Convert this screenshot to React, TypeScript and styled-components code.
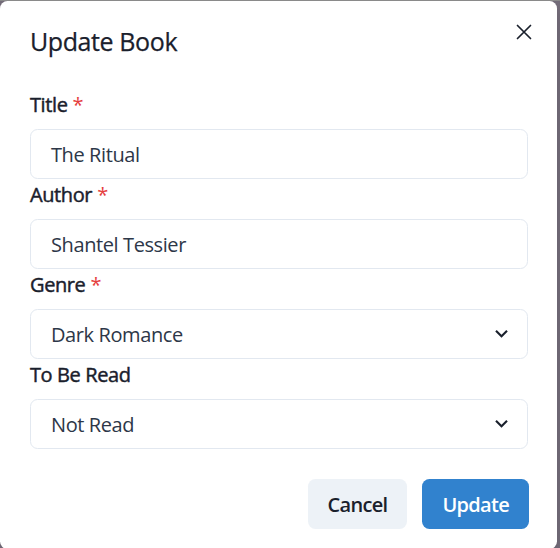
import React from "react";
import styled, { createGlobalStyle } from "styled-components";

const Global = createGlobalStyle`
  html, body { margin: 0; padding: 0; }
  body {
    background: #726b78;
    font-family: "Open Sans", "Noto Sans", sans-serif;
    width: 560px;
    height: 548px;
    overflow: hidden;
  }
  * { box-sizing: border-box; }
`;

const Backdrop = styled.div`
  width: 560px;
  height: 548px;
  background: linear-gradient(#8a8a8a 0 1px, #726b78 1px);
  padding-top: 1px;
`;

const Modal = styled.section`
  position: relative;
  width: 557px;
  background: #ffffff;
  border-radius: 7.5px;
  box-shadow: 0 10px 15px -3px rgba(0, 0, 0, 0.1), 0 4px 6px -2px rgba(0, 0, 0, 0.05);
  color: #1a202c;
`;

const Header = styled.header`
  padding: 22px 30px 18px;
  font-size: 25px;
  line-height: 37.5px;
  font-weight: 400;
  -webkit-text-stroke: 0.25px #1a202c;
  color: #1a202c;
  letter-spacing: -0.4px;
`;

const CloseButton = styled.button`
  position: absolute;
  top: 11px;
  right: 13px;
  width: 40px;
  height: 40px;
  border: none;
  background: transparent;
  border-radius: 7.5px;
  display: flex;
  align-items: center;
  justify-content: center;
  color: #1a202c;
  padding: 0;
  cursor: pointer;
`;

const Body = styled.div`
  padding: 10px 29px 10px 30px;
  display: flex;
  flex-direction: column;
`;

const Field = styled.div`
  display: flex;
  flex-direction: column;
`;

const Label = styled.label`
  font-size: 20px;
  height: 30px;
  line-height: 28px;
  padding-top: 2px;
  font-weight: 400;
  -webkit-text-stroke: 0.45px #1a202c;
  color: #1a202c;
  margin-bottom: 10px;
  letter-spacing: -0.4px;
`;

const Star = styled.span`
  color: #e53e3e;
  -webkit-text-stroke: 0;
  margin-left: 5px;
`;

const Control = styled.div`
  position: relative;
  height: 50px;
  border: 1px solid #e2e8f0;
  border-radius: 7.5px;
  display: flex;
  align-items: center;
  padding: 2px 20px 0;
  font-size: 20px;
  color: #2d3748;
  letter-spacing: -0.4px;
`;

const Value = styled.span`
  flex: 1;
`;

const Chevron = styled.svg`
  width: 25px;
  height: 25px;
  margin-right: -7px;
  margin-top: -2px;
  color: #1a202c;
`;

const Footer = styled.footer`
  display: flex;
  justify-content: flex-end;
  gap: 15px;
  padding: 20px 28px 20px 30px;
`;

const Button = styled.button<{ $primary?: boolean }>`
  height: 50px;
  padding: 2px 20px 0;
  border: none;
  border-radius: 7.5px;
  font-family: inherit;
  font-size: 20px;
  font-weight: 600;
  letter-spacing: -0.7px;
  background: ${(p) => (p.$primary ? "#3182ce" : "#edf2f7")};
  color: ${(p) => (p.$primary ? "#ffffff" : "#1a202c")};
  cursor: pointer;
`;

type FieldDef = { label: string; value: string; required?: boolean; select?: boolean };

const fields: FieldDef[] = [
  { label: "Title", value: "The Ritual", required: true },
  { label: "Author", value: "Shantel Tessier", required: true },
  { label: "Genre", value: "Dark Romance", required: true, select: true },
  { label: "To Be Read", value: "Not Read", select: true },
];

export default function App() {
  return (
    <>
      <Global />
      <Backdrop>
        <Modal>
          <Header>Update Book</Header>
          <CloseButton aria-label="Close">
            <svg width="16" height="16" viewBox="0 0 16 16" fill="none">
              <path d="M1.5 1.5L14.5 14.5M14.5 1.5L1.5 14.5" stroke="currentColor" strokeWidth="1.7" strokeLinecap="round" />
            </svg>
          </CloseButton>
          <Body>
            {fields.map((f) => (
              <Field key={f.label}>
                <Label>
                  {f.label}
                  {f.required && <Star>*</Star>}
                </Label>
                <Control>
                  <Value>{f.value}</Value>
                  {f.select && (
                    <Chevron viewBox="0 0 24 24">
                      <path fill="currentColor" d="M16.59 8.59L12 13.17 7.41 8.59 6 10l6 6 6-6z" />
                    </Chevron>
                  )}
                </Control>
              </Field>
            ))}
          </Body>
          <Footer>
            <Button>Cancel</Button>
            <Button $primary>Update</Button>
          </Footer>
        </Modal>
      </Backdrop>
    </>
  );
}
